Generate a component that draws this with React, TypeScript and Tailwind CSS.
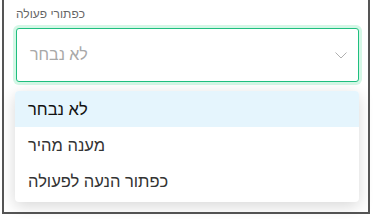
import React from "react";

export default function App() {
  return (
    <div className="w-[373px] h-[219px] bg-white" style={{ fontFamily: '"Liberation Sans", "DejaVu Sans", sans-serif' }}>
      <div className="ml-[2px] w-[368px] h-[214px] border-l-2 border-r-2 border-b-2 border-[#555] bg-white pl-[12px] pr-[9px] pt-[7px]">
        <div className="text-[12px] leading-[14px] text-[#666]">כפתורי פעולה</div>
        <div className="mt-[7px] h-[54px] rounded-[3px] border border-[#1fbf7f] ring-[3px] ring-[#d4f7e6] flex items-center justify-between pl-[13px] pr-[11px] bg-white">
          <span className="text-[16px] text-[#a8a8a8]">לא נבחר</span>
          <svg width="12" height="7" viewBox="0 0 12 7" fill="none" className="mt-[1px]">
            <path d="M0.5 0.5 L6 6 L11.5 0.5" stroke="#b0b0b0" strokeWidth="1" />
          </svg>
        </div>
        <div className="mt-[9px] rounded-[4px] bg-white shadow-[0_4px_16px_rgba(0,0,0,0.16)] overflow-hidden pb-[3px] -ml-px">
          <div className="h-[36px] bg-[#e5f5fd] flex items-center pl-[13px] text-[16.5px] text-[#111] font-medium">לא נבחר</div>
          <div className="h-[36px] flex items-center pl-[13px] text-[16.5px] text-[#333]">מענה מהיר</div>
          <div className="h-[36px] flex items-center pl-[13px] text-[16.5px] text-[#333]">כפתור הנעה לפעולה</div>
        </div>
      </div>
    </div>
  );
}
